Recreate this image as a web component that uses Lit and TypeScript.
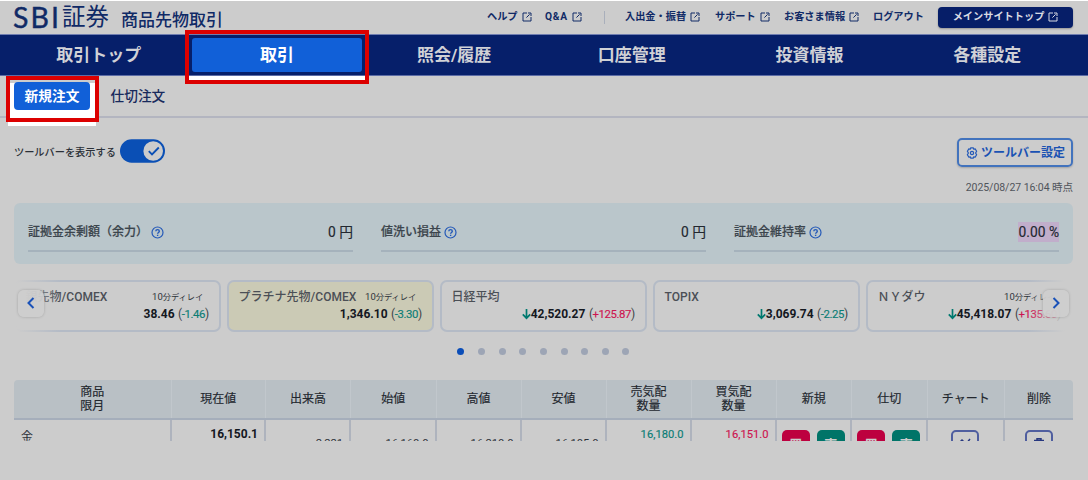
import { LitElement, html, css, nothing } from "lit";
import { customElement } from "lit/decorators.js";

interface Quote {
  name: string;
  delayed?: boolean;
  arrow?: boolean;
  price: string;
  change: string;
  highlight?: boolean;
}

const external = html`<svg class="ext" viewBox="0 0 10 10" width="10" height="10" fill="none" stroke="currentColor" stroke-width="1">
  <path d="M5 1H1v8h8V5M6 1h3v3M7.6 2.4 4.4 5.6" />
</svg>`;

const help = html`<svg class="help" viewBox="0 0 13 13" width="13" height="13" fill="none" stroke="#2459b8" stroke-width="1.2">
  <circle cx="6.5" cy="6.5" r="5.5" />
  <path d="M4.8 5.3c0-2.3 3.5-2.2 3.5-.1 0 1.2-1.7 1.3-1.7 2.6" stroke-width="1.4" />
  <path d="M6.6 8.7v1.3" stroke-width="1.4" />
</svg>`;

const QUOTES: Quote[] = [
  { name: "銀先物/COMEX", delayed: true, price: "38.46", change: "-1.46" },
  { name: "プラチナ先物/COMEX", delayed: true, price: "1,346.10", change: "-3.30", highlight: true },
  { name: "日経平均", arrow: true, price: "42,520.27", change: "+125.87" },
  { name: "TOPIX", arrow: true, price: "3,069.74", change: "-2.25" },
  { name: "ＮＹダウ", delayed: true, arrow: true, price: "45,418.07", change: "+135.60" },
];

const HEADERS = [
  ["商品", "限月"], ["現在値"], ["出来高"], ["始値"], ["高値"], ["安値"],
  ["売気配", "数量"], ["買気配", "数量"], ["新規"], ["仕切"], ["チャート"], ["削除"],
];

@customElement("app-root")
export class AppRoot extends LitElement {
  static styles = css`
    :host {
      display: block;
      box-sizing: border-box;
      position: relative;
      width: 1088px;
      height: 480px;
      overflow: hidden;
      background: #cccccc;
      border-top: 1px solid #fff;
      color: #2b3038;
      font-family: Roboto, "Noto Sans CJK JP", sans-serif;
      font-size: 12px;
      line-height: 1;
      white-space: nowrap;
    }
    * { box-sizing: border-box; }
    svg { display: block; flex: none; }
    .header { display: flex; height: 33px; padding-left: 13px; color: #102a66; }
    .brand { display: flex; width: 474px; height: 33px; }
    .sbi { font: 400 28.5px/33px Lato, sans-serif; width: 49px; letter-spacing: 2px; -webkit-text-stroke: 0.4px #102a66; }
    .sec { font-size: 23.5px; line-height: 33px; width: 59px; }
    .product { font-size: 17px; font-weight: 500; line-height: 39px; }
    .links {
      display: grid;
      grid-template-columns: 58px 59px 21px 90px 69px 89px 65px 135px;
      align-items: center;
      height: 32px;
      font-size: 10.2px;
      font-weight: 700;
    }
    .link { display: flex; align-items: center; gap: 4px; }
    .link span { padding-top: 1px; }
    .qa { letter-spacing: 0.8px; }
    .rule { width: 1px; height: 13px; background: #a9afbb; }
    .main-site {
      display: flex; align-items: center; justify-content: center; gap: 4px;
      height: 21px; border-radius: 4px; background: #061e68; color: #d8dae2;
      box-shadow: 0 1px 2px #0004;
    }
    .main-site span { padding-top: 1px; }
    .nav {
      display: grid; grid-template-columns: repeat(6, 1fr);
      height: 42px; padding: 3px 12px 3px 10px;
      background: #061f6a; border-top: 1px solid #6f7db0; border-bottom: 1px solid #5c6ca6;
      color: #d0d1d6; font-size: 17px; font-weight: 700;
    }
    .tab { display: flex; align-items: center; justify-content: center; padding-top: 1px; }
    .tab.on { margin: 0 3px 0 4px; height: 34px; border-radius: 3px; background: #1160d8; color: #fff; }
    .sub {
      display: flex; height: 42px; padding: 6px 0 0 14px;
      border-bottom: 2px solid #b3b5c0; font-size: 13.7px;
    }
    .chip {
      z-index: 2; display: flex; align-items: center; justify-content: center;
      width: 76px; height: 28px; border-radius: 4px; background: #1160d8; color: #fff; font-weight: 700;
      padding-top: 1px;
    }
    .sub-link { margin-left: 20.5px; line-height: 29px; font-weight: 500; color: #182a5c; }
    .frame { position: absolute; border: 4px solid #dc0000; }
    .f-nav { left: 185px; top: 29px; width: 184px; height: 54px; }
    .f-sub { left: 6px; top: 75px; width: 93px; height: 46px; z-index: 3; }
    .lit { position: absolute; background: #fff; }
    .l-nav { left: 189px; top: 75px; width: 176px; height: 4px; }
    .l-sub { left: 8px; top: 82px; width: 88px; height: 43px; z-index: 1; }
    .tools { display: flex; align-items: center; height: 29px; margin: 20px 15px 0 14px; }
    .tools-label { font-size: 10.2px; width: 105.5px; font-weight: 500; padding-top: 1px; }
    .tools svg.toggle { margin-top: -3px; }
    .settings {
      margin-left: auto; display: flex; align-items: center; gap: 4px;
      width: 116px; height: 29px; padding-left: 7px;
      border: 2px solid #4273bd; border-radius: 5px;
      color: #1a52b3; font-weight: 700; box-shadow: 0 1px 2px #0003;
    }
    .settings span { margin-left: -1px; }
    .asof { margin: 14px 15px 0 0; height: 13px; line-height: 13px; text-align: right; font-size: 10.5px; letter-spacing: -0.05px; color: #50545b; }
    .margin {
      display: grid; grid-template-columns: repeat(3, 325px); gap: 28px;
      width: 1059px; height: 61px; margin: 8.5px 0 0 14px; padding: 19px 14px 0;
      border-radius: 6px; background: #bac6cb;
    }
    .item { display: flex; align-items: center; height: 30px; padding-bottom: 8px; border-bottom: 2px solid #a5b2bc; }
    .item .label { font-weight: 500; color: #3c454d; -webkit-text-stroke: 0.2px #3c454d; }
    .help { margin: 2px 0 0 3px; }
    .value { margin-left: auto; padding-top: 2px; font-size: 13.8px; font-weight: 400; color: #22272f; -webkit-text-stroke: 0.15px #22272f; }
    .value.warn { padding: 4px 0 3px 1px; margin-top: 1px; background: #c1aecb; }
    .carousel { position: relative; width: 1060px; height: 53px; margin: 15px 0 0 14px; overflow: hidden; }
    .cards { display: grid; grid-template-columns: repeat(5, 207px); gap: 6px; padding-top: 1px; margin-left: -0.4px; }
    .card { height: 52px; padding: 8px 10px 0 10px; border: 2px solid #b4bbc6; border-radius: 7px; }
    .card.hl { background: #cbcab5; }
    .top { display: flex; justify-content: space-between; height: 14px; align-items: center; font-weight: 500; color: #4b4f56; }
    .delay { padding-right: 5.5px; font-size: 8.2px; font-weight: 400; color: #30343b; }
    .delay b { font-size: 9.5px; font-weight: 400; }
    .bottom { display: flex; justify-content: flex-end; align-items: center; height: 14px; margin-top: 3.5px; }
    .price { font-size: 12px; font-weight: 700; color: #14181f; }
    .change { margin-left: 3.5px; font-size: 12px; letter-spacing: -0.45px; color: #40444a; }
    .change span { font-size: 11.4px; -webkit-text-stroke: 0.15px currentColor; }
    .down, .td.down { color: #0b7d75; }
    .up, .td.up { color: #cc1450; }
    .fade { position: absolute; top: 0; width: 46px; height: 53px; }
    .fade.l { left: 0; background: linear-gradient(90deg, #ccc 5%, #ccc0); }
    .fade.r { right: 0; background: linear-gradient(270deg, #ccc 20%, #ccc0); }
    .arrow {
      position: absolute; top: 11px; display: flex; align-items: center; justify-content: center;
      width: 26px; height: 27px; border-radius: 6px; background: #cdcdcde8; box-shadow: 0 0 3px #0003;
    }
    .arrow.l { left: 4px; }
    .arrow.r { right: 5px; }
    .dots { display: flex; gap: 13.65px; margin: 16.5px 0 0 457.3px; height: 7px; }
    .dot { width: 7px; height: 7px; border-radius: 50%; background: #9da5b5; }
    .dot.on { background: #0a4db8; }
    .table { width: 1059px; height: 61px; margin: 25px 0 0 14px; overflow: hidden; border-radius: 4px 4px 0 0; }
    .row { display: grid; grid-template-columns: 157.5px 94.5px 85px 85.5px 85px 85px 85px 85px 75.5px 75.5px 77.5px 68px; }
    .head { height: 40px; background: #b9c0c5; border-bottom: 2px solid #a5aebb; }
    .th {
      display: flex; flex-direction: column; align-items: center; justify-content: center;
      line-height: 14.2px; border-right: 1px solid #c1c7cc; color: #22272e; font-weight: 400;
      -webkit-text-stroke: 0.15px #22272e;
    }
    .th:last-child, .td:last-child { border-right: 0; }
    .td { height: 48px; display: flex; justify-content: flex-end; padding: 9px 6px 0 0; border-right: 2px solid #aeb3bd; font-size: 11.2px; color: #2c3139; }
    .td.name { justify-content: flex-start; padding: 11px 0 0 7px; font-size: 12px; }
    .td.now { font-size: 12px; font-weight: 700; padding-top: 8px; color: #14181f; }
    .td.low { padding-top: 18px; font-size: 11.2px; }
    .td.down, .td.up { -webkit-text-stroke: 0.15px currentColor; }
    .td.acts { justify-content: center; gap: 7px; padding: 10px 0 0; }
    .btn {
      display: flex; align-items: center; justify-content: center; width: 28px; height: 28px;
      border-radius: 5px; color: #ccc; font-size: 13px; font-weight: 700;
    }
    .btn.buy { background: #bd003f; }
    .btn.sell { background: #007468; }
    .btn.line { border: 2px solid #4f5e9f; }
  `;

  private quote(q: Quote) {
    const tone = q.change.startsWith("-") ? "down" : "up";
    return html`<div class="card ${q.highlight ? "hl" : ""}">
      <div class="top"><span>${q.name}</span>${q.delayed ? html`<span class="delay"><b>10</b>分ディレイ</span>` : nothing}</div>
      <div class="bottom">
        ${q.arrow
          ? html`<svg width="9" height="12" viewBox="0 0 9 12" fill="none" stroke="#00796f" stroke-width="1.7"><path d="M4.5 1v9M.8 6.4l3.7 3.8 3.7-3.8" /></svg>`
          : nothing}
        <span class="price">${q.price}</span>
        <span class="change">(<span class=${tone}>${q.change}</span>)</span>
      </div>
    </div>`;
  }

  private pair() {
    return html`<div class="td acts"><span class="btn buy">買</span><span class="btn sell">売</span></div>`;
  }

  render() {
    return html`
      <div class="header">
        <div class="brand"><span class="sbi">SBI</span><span class="sec">証券</span><span class="product">商品先物取引</span></div>
        <div class="links">
          <span class="link"><span>ヘルプ</span>${external}</span>
          <span class="link"><span class="qa">Q&amp;A</span>${external}</span>
          <span class="rule"></span>
          <span class="link"><span>入出金・振替</span>${external}</span>
          <span class="link"><span>サポート</span>${external}</span>
          <span class="link"><span>お客さま情報</span>${external}</span>
          <span class="link"><span>ログアウト</span></span>
          <span class="main-site"><span>メインサイトトップ</span>${external}</span>
        </div>
      </div>
      <div class="nav">
        ${["取引トップ", "取引", "照会/履歴", "口座管理", "投資情報", "各種設定"].map(
          (t, i) => html`<div class="tab ${i === 1 ? "on" : ""}">${t}</div>`
        )}
      </div>
      <div class="sub"><span class="chip">新規注文</span><span class="sub-link">仕切注文</span></div>
      <div class="lit l-nav"></div><div class="frame f-nav"></div>
      <div class="lit l-sub"></div><div class="frame f-sub"></div>

      <div class="tools">
        <span class="tools-label">ツールバーを表示する</span>
        <svg class="toggle" width="45" height="24" viewBox="0 0 45 24">
          <rect x="0" y=".3" width="45" height="23.4" rx="11.7" fill="#0a4fb5" />
          <circle cx="33.2" cy="12" r="9.8" fill="#ccc" />
          <path d="m28.8 12.2 3.2 3.3 6.8-7" fill="none" stroke="#0a4fb5" stroke-width="1.8" />
        </svg>
        <span class="settings">
          <svg width="12" height="12" viewBox="0 0 12 12" fill="none" stroke="#2459b8" stroke-width="1.2">
            <path d="m4.8.8h2.4l.5 1.4 1.5-.2 1.4 2.2-1 1.8 1 1.8-1.4 2.2-1.5-.2-.5 1.4H4.8l-.5-1.4-1.5.2-1.4-2.2 1-1.8-1-1.8L2.8 2l1.5.2z" />
            <circle cx="6" cy="6" r="1.6" />
          </svg>
          <span>ツールバー設定</span>
        </span>
      </div>
      <div class="asof">2025/08/27 16:04 時点</div>

      <div class="margin">
        <div class="item"><span class="label">証拠金余剰額（余力）</span>${help}<span class="value">0 円</span></div>
        <div class="item"><span class="label">値洗い損益</span>${help}<span class="value">0 円</span></div>
        <div class="item"><span class="label">証拠金維持率</span>${help}<span class="value warn">0.00 %</span></div>
      </div>

      <div class="carousel">
        <div class="cards">${QUOTES.map((q) => this.quote(q))}</div>
        <div class="fade l"></div><div class="fade r"></div>
        <div class="arrow l"><svg width="8" height="12" viewBox="0 0 8 12" fill="none" stroke="#1a52b8" stroke-width="2"><path d="M6.5 1 1.5 6l5 5" /></svg></div>
        <div class="arrow r"><svg width="8" height="12" viewBox="0 0 8 12" fill="none" stroke="#1a52b8" stroke-width="2"><path d="m1.5 1 5 5-5 5" /></svg></div>
      </div>
      <div class="dots">${Array.from({ length: 9 }, (_, i) => html`<span class="dot ${i === 0 ? "on" : ""}"></span>`)}</div>

      <div class="table">
        <div class="row head">${HEADERS.map((h) => html`<div class="th">${h.map((l) => html`<span>${l}</span>`)}</div>`)}</div>
        <div class="row">
          <div class="td name">金</div>
          <div class="td now">16,150.1</div>
          ${["2,221", "16,160.0", "16,210.0", "16,105.0"].map((v) => html`<div class="td low">${v}</div>`)}
          <div class="td down">16,180.0</div>
          <div class="td up">16,151.0</div>
          ${this.pair()}${this.pair()}
          <div class="td acts"><span class="btn line">
            <svg width="16" height="14" viewBox="0 0 16 14" fill="none" stroke="#26377f" stroke-width="1.5"><path d="m2 6 3-3 4 4 4-5M2 12V9M6 12V8M10 12v-2M14 12V6" /></svg>
          </span></div>
          <div class="td acts"><span class="btn line">
            <svg width="14" height="14" viewBox="0 0 14 14" fill="none" stroke="#26377f" stroke-width="1.5"><path d="M2 3.5h10M5 3V1.7h4V3M3.5 4v8.5h7V4" /></svg>
          </span></div>
        </div>
      </div>
    `;
  }
}
